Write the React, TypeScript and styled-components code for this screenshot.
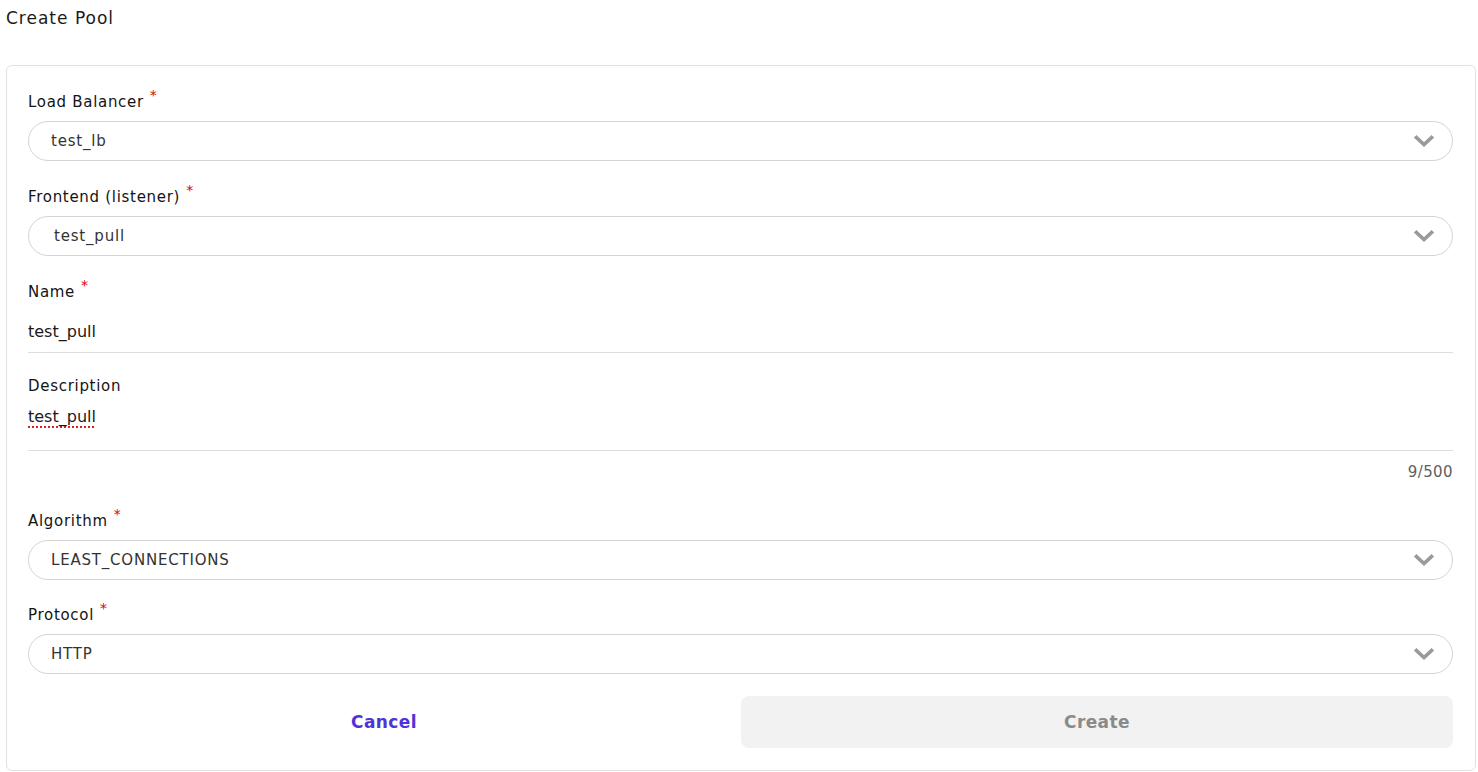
import styled, { createGlobalStyle } from 'styled-components';

const GlobalStyle = createGlobalStyle`
  html, body {
    margin: 0;
    padding: 0;
    background: #ffffff;
  }
  body {
    font-family: 'DejaVu Sans', 'Noto Sans', sans-serif;
    color: #1c1c1c;
  }
`;

const Page = styled.div`
  width: 1478px;
  height: 772px;
  box-sizing: border-box;
  padding: 6px 2px 2px 6px;
  display: flex;
  flex-direction: column;
`;

const Title = styled.h1`
  margin: 0;
  font-size: 17px;
  line-height: 24px;
  font-weight: 400;
  color: #1a1a1a;
  letter-spacing: 1px;
`;

const Card = styled.form`
  margin-top: 35px;
  border: 1px solid #e2e2e2;
  border-radius: 6px;
  padding: 26px 22px 22px 21px;
  display: flex;
  flex-direction: column;
`;

const Field = styled.div<{ $gapAfter?: number }>`
  display: flex;
  flex-direction: column;
  margin-bottom: ${(p) => p.$gapAfter ?? 26}px;
`;

const Label = styled.label`
  font-size: 15px;
  line-height: 20px;
  font-weight: 500;
  color: #141414;
  letter-spacing: 0.7px;
  margin-bottom: 9px;
  display: flex;
  align-items: flex-start;
`;

const Required = styled.span`
  color: #e00000;
  font-size: 14px;
  line-height: 12px;
  margin-left: 6px;
  margin-top: -3px;
`;

const SelectBox = styled.div<{ $indent?: number }>`
  height: 40px;
  box-sizing: border-box;
  border: 1px solid #d4d4d4;
  border-radius: 20px;
  display: flex;
  align-items: center;
  justify-content: space-between;
  padding: 0 18px 0 ${(p) => p.$indent ?? 22}px;
  font-size: 15px;
  letter-spacing: 0.8px;
  color: #333333;
`;

const Chevron = () => (
  <svg width="20" height="14" viewBox="0 0 20 14" aria-hidden="true">
    <path d="M2.5 3.5 L10 10.5 L17.5 3.5" fill="none" stroke="#9a9a9a" strokeWidth="3.6" strokeLinecap="square" strokeLinejoin="miter" />
  </svg>
);

const LineInput = styled.div`
  height: 42px;
  box-sizing: border-box;
  border-bottom: 1px solid #dedede;
  display: flex;
  align-items: center;
  font-size: 16px;
  color: #1a1a1a;
`;

const TextArea = styled.div`
  height: 46px;
  box-sizing: border-box;
  border-bottom: 1px solid #dedede;
  padding-top: 1px;
  font-size: 16px;
  line-height: 22px;
  color: #1a1a1a;
`;

const Misspelled = styled.span`
  text-decoration: underline dotted #e02020;
  text-decoration-thickness: 2px;
  text-underline-offset: 4px;
`;

const Counter = styled.div`
  text-align: right;
  font-size: 15px;
  line-height: 20px;
  letter-spacing: 0.4px;
  color: #5f5f5f;
  margin-top: 11px;
`;

const Actions = styled.div`
  display: grid;
  grid-template-columns: 1fr 1fr;
  gap: 1px;
`;

const Button = styled.button<{ $primary?: boolean }>`
  height: 52px;
  border: none;
  border-radius: 8px;
  font-family: inherit;
  font-size: 17px;
  font-weight: 700;
  letter-spacing: 0.4px;
  cursor: pointer;
  background: ${(p) => (p.$primary ? '#f2f2f2' : 'transparent')};
  color: ${(p) => (p.$primary ? '#8a8a8a' : '#4f35d9')};
`;

const SelectField = ({
  label,
  value,
  indent,
  gapAfter,
}: {
  label: string;
  value: string;
  indent?: number;
  gapAfter?: number;
}) => (
  <Field $gapAfter={gapAfter}>
    <Label>
      {label}
      <Required>*</Required>
    </Label>
    <SelectBox $indent={indent}>
      <span>{value}</span>
      <Chevron />
    </SelectBox>
  </Field>
);

export default function App() {
  return (
    <>
      <GlobalStyle />
      <Page>
        <Title>Create Pool</Title>
        <Card onSubmit={(e) => e.preventDefault()}>
          <SelectField label="Load Balancer" value="test_lb" />
          <SelectField label="Frontend (listener)" value="test_pull" indent={25} />
          <Field $gapAfter={23}>
            <Label>
              Name
              <Required>*</Required>
            </Label>
            <LineInput>test_pull</LineInput>
          </Field>
          <Field $gapAfter={29}>
            <Label>Description</Label>
            <TextArea>
              <Misspelled>test_pull</Misspelled>
            </TextArea>
            <Counter>9/500</Counter>
          </Field>
          <SelectField label="Algorithm" value="LEAST_CONNECTIONS" gapAfter={25} />
          <SelectField label="Protocol" value="HTTP" gapAfter={22} />
          <Actions>
            <Button type="button">Cancel</Button>
            <Button type="button" $primary>
              Create
            </Button>
          </Actions>
        </Card>
      </Page>
    </>
  );
}
